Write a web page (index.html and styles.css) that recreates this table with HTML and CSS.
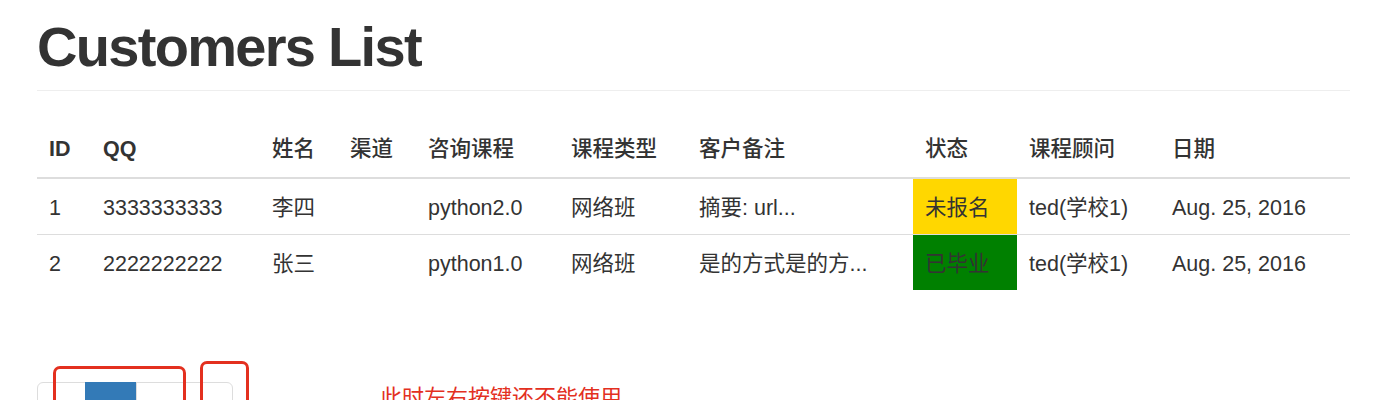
FILE: index.html
```html
<!DOCTYPE html>
<html lang="zh">
<head>
<meta charset="utf-8">
<title>Customers List</title>
<link rel="stylesheet" href="styles.css">
</head>
<body>
<div class="container">
  <div class="page-header">
    <h1>Customers List</h1>
  </div>
  <table class="table">
    <colgroup>
      <col class="c-id"><col class="c-qq"><col class="c-name"><col class="c-src"><col class="c-course"><col class="c-type"><col class="c-memo"><col class="c-status"><col class="c-consult"><col class="c-date">
    </colgroup>
    <thead>
      <tr>
        <th>ID</th><th>QQ</th><th class="cjk">姓名</th><th class="cjk">渠道</th><th class="cjk">咨询课程</th><th class="cjk">课程类型</th><th class="cjk">客户备注</th><th class="cjk">状态</th><th class="cjk">课程顾问</th><th class="cjk">日期</th>
      </tr>
    </thead>
    <tbody>
      <tr>
        <td>1</td><td>3333333333</td><td>李四</td><td></td><td>python2.0</td><td>网络班</td><td>摘要: url...</td><td class="st-unreg">未报名</td><td>ted(学校1)</td><td>Aug. 25, 2016</td>
      </tr>
      <tr>
        <td>2</td><td>2222222222</td><td>张三</td><td></td><td>python1.0</td><td>网络班</td><td>是的方式是的方...</td><td class="st-grad">已毕业</td><td>ted(学校1)</td><td>Aug. 25, 2016</td>
      </tr>
    </tbody>
  </table>
  <div class="bottom">
    <ul class="pagination">
      <li class="pg-item">&laquo;</li>
      <li class="pg-item active">1</li>
      <li class="pg-item">2</li>
      <li class="pg-item">&raquo;</li>
    </ul>
    <p class="note">此时左右按键还不能使用</p>
    <div class="mark mark-a"></div>
    <div class="mark mark-b"></div>
  </div>
</div>
</body>
</html>
```

FILE: styles.css
```css
html, body {
  margin: 0;
  padding: 0;
  overflow: hidden;
  background: #fff;
}
body {
  font-family: "Liberation Sans", "Noto Sans CJK SC", sans-serif;
  font-size: 21.5px;
  line-height: 31px;
  color: #333;
}
.container {
  width: 1313px;
  padding-left: 37px;
}
.page-header {
  margin-top: 16px;
  padding-bottom: 12px;
  border-bottom: 1px solid #eee;
}
.page-header h1 {
  margin: 0;
  font-size: 56px;
  line-height: 61.6px;
  font-weight: 700;
  letter-spacing: -1.7px;
  color: #333;
}
.table {
  width: 1313px;
  margin-top: 31px;
  border-collapse: collapse;
  border-spacing: 0;
  table-layout: fixed;
}
.c-id { width: 54px; }
.c-qq { width: 169px; }
.c-name { width: 78px; }
.c-src { width: 78px; }
.c-course { width: 143px; }
.c-type { width: 128px; }
.c-memo { width: 226px; }
.c-status { width: 104px; }
.c-consult { width: 143px; }
.c-date { width: 190px; }
.table th {
  text-align: left;
  font-weight: 700;
  padding: 12px 11px 12px 12px;
  border-bottom: 2px solid #ddd;
  white-space: nowrap;
}
.table th.cjk {
  font-weight: 500;
}
.table td {
  padding: 14px 11px 10px 12px;
  border-top: 1px solid #ddd;
  white-space: nowrap;
  overflow: hidden;
}
.table tbody tr:first-child td {
  border-top: 1px solid #e4e4e4;
}
.table td.st-unreg {
  background: #ffd700;
}
.table td.st-grad {
  background: #008000;
}
.bottom {
  position: relative;
  display: flex;
  align-items: flex-start;
  gap: 147px;
  margin-top: 92px;
}
.pagination {
  display: flex;
  margin: 0;
  padding: 0;
  list-style: none;
}
.pg-item {
  padding: 18px 17px 6px;
  border: 1px solid #ddd;
  margin-left: -1px;
  color: #337ab7;
  min-width: 13px;
  text-align: center;
}
.pg-item:first-child {
  margin-left: 0;
  border-radius: 6px 0 0 6px;
}
.pg-item:last-child {
  border-radius: 0 6px 6px 0;
}
.pg-item.active {
  background: #337ab7;
  border-color: #337ab7;
  color: #fff;
  padding-left: 18px;
  padding-right: 19px;
}
.note {
  margin: 0;
  color: #e3301f;
  font-size: 22px;
  line-height: 31px;
}
.mark {
  position: absolute;
  border: 3px solid #e3301f;
  border-radius: 7px;
  height: 80px;
}
.mark-a {
  left: 16px;
  top: -16px;
  width: 127px;
}
.mark-b {
  left: 163px;
  top: -21px;
  width: 43px;
}
```
